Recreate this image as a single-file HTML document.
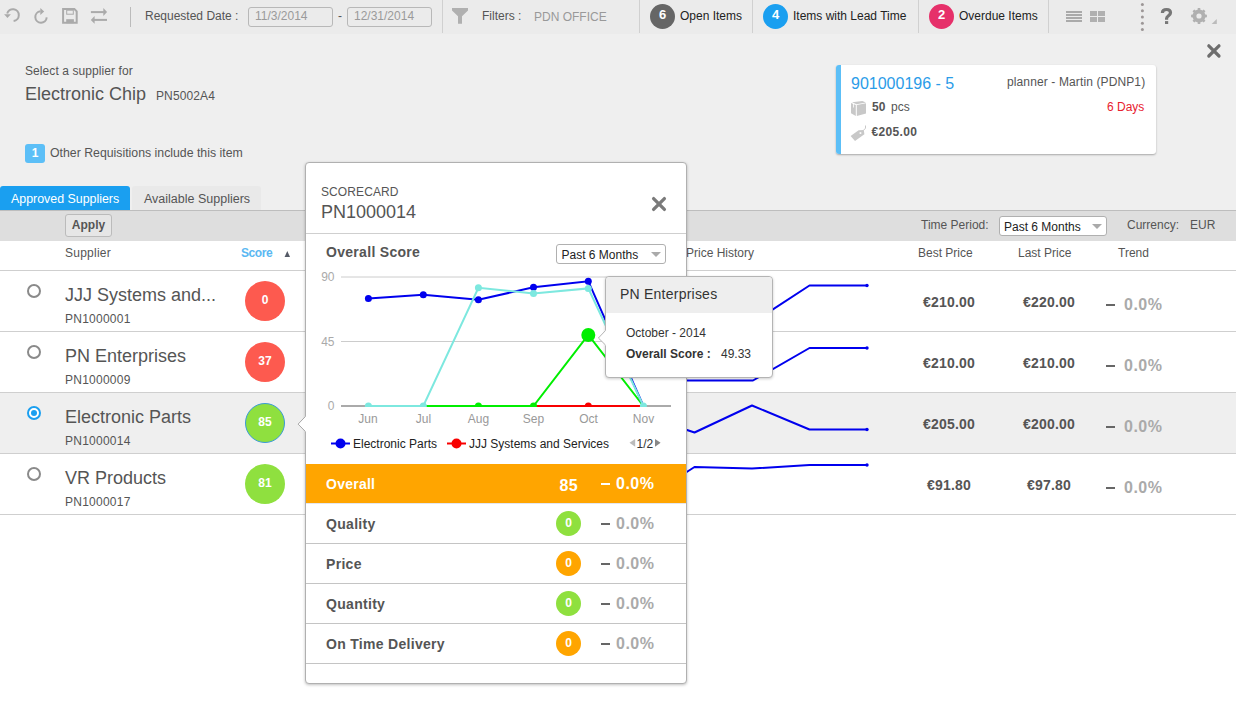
<!DOCTYPE html>
<html><head><meta charset="utf-8">
<style>
*{box-sizing:border-box;margin:0;padding:0}
html,body{width:1236px;height:703px;overflow:hidden;background:#fff;font-family:"Liberation Sans",sans-serif;color:#555;position:relative}
.a{position:absolute;white-space:nowrap;line-height:1}
#tb{position:absolute;left:0;top:0;width:1236px;height:34px;background:#ebebeb}
#main{position:absolute;left:0;top:34px;width:1236px;height:177px;background:#efefef}
.sep{position:absolute;top:0;width:1px;height:33px;background:#d0d0d0}
.inp{position:absolute;top:7px;height:20px;border:1px solid #b8b8b8;border-radius:3px;font-size:12px;color:#9a9a9a;padding-left:6px;line-height:16px}
.badge{position:absolute;top:4px;width:25px;height:25px;border-radius:50%;color:#fff;font-weight:bold;font-size:13px;text-align:center;line-height:21px}
.f12{font-size:12px}
.row{position:absolute;left:0;width:1236px;height:61px;border-bottom:1px solid #cfcfcf}
.radio{position:absolute;left:27px;top:13px;width:14px;height:14px;border:2px solid #8a8a8a;border-radius:50%;background:#fff}
.sname{position:absolute;left:65px;top:15px;font-size:18px;color:#555;line-height:1;white-space:nowrap}
.sid{position:absolute;left:65px;top:42px;font-size:12px;color:#555;line-height:1;white-space:nowrap;letter-spacing:.25px}
.score{position:absolute;left:245px;top:10px;width:40px;height:40px;border-radius:50%;color:#fff;font-weight:bold;font-size:12px;text-align:center;line-height:38px}
.price{position:absolute;top:24px;font-size:14px;font-weight:bold;color:#555;line-height:1;white-space:nowrap;letter-spacing:.2px}
.dash{position:absolute;width:9px;height:2px;background:#666}
.pct{position:absolute;font-size:16px;font-weight:bold;color:#aaa;line-height:1;white-space:nowrap;letter-spacing:.5px}
#pop{position:absolute;left:305px;top:162px;width:382px;height:522px;background:#fff;border:1px solid #b0b0b0;border-radius:4px;box-shadow:0 1px 3px rgba(0,0,0,.25)}
.srow{position:absolute;left:0;width:380px;height:40px;border-bottom:1px solid #c4c4c4}
.slab{position:absolute;left:20px;top:13px;font-size:14px;font-weight:bold;color:#555;line-height:1;white-space:nowrap;letter-spacing:.3px}
.sc{position:absolute;left:250px;top:7px;width:25px;height:25px;border-radius:50%;color:#fff;font-weight:bold;font-size:12px;text-align:center;line-height:25px}
</style></head><body>
<div id="tb">
  <div class="sep" style="left:130px;top:7px;height:20px;background:#bbb"></div>
  <div class="a f12" style="left:145px;top:10px;color:#555">Requested Date :</div>
  <div class="inp" style="left:248px;width:85px">11/3/2014</div>
  <div class="a f12" style="left:338px;top:10px">-</div>
  <div class="inp" style="left:347px;width:85px">12/31/2014</div>
  <div class="sep" style="left:442px"></div>
  <div class="a f12" style="left:482px;top:10px">Filters :</div>
  <div class="a f12" style="left:534px;top:11px;color:#999">PDN OFFICE</div>
  <div class="sep" style="left:639px"></div>
  <div class="badge" style="left:650px;background:#666">6</div>
  <div class="a f12" style="left:680px;top:10px;color:#222">Open Items</div>
  <div class="sep" style="left:752px"></div>
  <div class="badge" style="left:763px;background:#1a9ff0">4</div>
  <div class="a f12" style="left:793px;top:10px;color:#222">Items with Lead Time</div>
  <div class="sep" style="left:918px"></div>
  <div class="badge" style="left:929px;background:#e6306a">2</div>
  <div class="a f12" style="left:959px;top:10px;color:#222">Overdue Items</div>
  <div class="sep" style="left:1048px"></div>
</div>
<div id="main">
  <div class="a f12" style="left:25px;top:31px;letter-spacing:.08px">Select a supplier for</div>
  <div class="a" style="left:25px;top:51px;font-size:18px">Electronic Chip</div>
  <div class="a f12" style="left:156px;top:56px;letter-spacing:.12px">PN5002A4</div>
  <div class="a" style="left:25px;top:110px;width:20px;height:19px;background:#5cbff7;border-radius:3px;color:#fff;font-size:12px;font-weight:bold;text-align:center;line-height:19px">1</div>
  <div class="a" style="left:50px;top:113px;font-size:12.3px">Other Requisitions include this item</div>
  <div class="a" style="left:0;top:152px;width:130px;height:24px;background:#1a9ff0;border-radius:3px 3px 0 0;color:#fff;font-size:12.4px;line-height:26px;padding-left:11px">Approved Suppliers</div>
  <div class="a" style="left:132px;top:152px;width:129px;height:24px;background:#e9e9e9;border-radius:3px 3px 0 0;color:#555;font-size:12.5px;line-height:26px;padding-left:12px">Available Suppliers</div>
</div>

<!-- toolbar icons -->
<svg class="a" style="left:0;top:0;z-index:2" width="1236" height="34">
  <g fill="none" stroke="#aaaaaa" stroke-width="2">
    <path d="M13.62,20.96 A5.9,5.9 0 1 0 7.2,13.57"/>
    <path d="M46.69,17.4 A5.7,5.7 0 1 1 40.4,11.33"/>
  </g>
  <g fill="#aaaaaa">
    <path d="M4.1,14.2 L10.9,14.2 L7.5,17.9 Z"/>
    <path d="M40.3,8.1 L44.2,11.5 L40.3,14.9 Z"/>
  </g>
  <g fill="none" stroke="#aaaaaa">
    <path stroke-width="2" d="M63.1,9.1 H74.4 L76.7,11.4 V22.7 H63.1 Z"/>
    <rect x="66.7" y="10.2" width="6.6" height="4" stroke-width="1"/>
  </g>
  <rect x="66.2" y="19.2" width="7.7" height="4" fill="#aaaaaa"/>
  <g fill="#aaaaaa">
    <rect x="90.9" y="11.1" width="13" height="2"/>
    <path d="M103.3,8.1 L107.1,12.1 L103.3,16.1 Z"/>
    <rect x="94" y="18.9" width="13" height="2"/>
    <path d="M94.6,16 L90.8,19.9 L94.6,23.8 Z"/>
  </g>
  <path d="M452,8 H468 V10.5 L462,16.2 V23.8 H458 V16.2 L452,10.5 Z" fill="#b0b0b0"/>
  <g fill="#aaaaaa">
    <rect x="1066" y="11" width="16" height="2"/><rect x="1066" y="14" width="16" height="2"/>
    <rect x="1066" y="17" width="16" height="2"/><rect x="1066" y="20" width="16" height="2"/>
  </g>
  <g fill="#b0b0b0">
    <rect x="1090" y="11" width="7" height="5"/><rect x="1098" y="11" width="7" height="5"/>
    <rect x="1090" y="17" width="7" height="5"/><rect x="1098" y="17" width="7" height="5"/>
  </g>
  <g fill="#9c9696">
    <circle cx="1142.4" cy="4.4" r="1.5"/><circle cx="1142.4" cy="10.7" r="1.5"/><circle cx="1142.4" cy="17" r="1.5"/>
    <circle cx="1142.4" cy="23.2" r="1.5"/><circle cx="1142.4" cy="29.4" r="1.5"/>
  </g>
  <g id="gear" fill="#b0b0b0">
    <path fill-rule="evenodd" d="M1196.55,10.09 L1197.60,9.75 L1197.75,8.10 L1200.25,8.10 L1200.40,9.75 L1201.45,10.09 L1202.43,10.60 L1203.70,9.53 L1205.47,11.30 L1204.40,12.57 L1204.91,13.55 L1205.25,14.60 L1206.90,14.75 L1206.90,17.25 L1205.25,17.40 L1204.91,18.45 L1204.40,19.43 L1205.47,20.70 L1203.70,22.47 L1202.43,21.40 L1201.45,21.91 L1200.40,22.25 L1200.25,23.90 L1197.75,23.90 L1197.60,22.25 L1196.55,21.91 L1195.57,21.40 L1194.30,22.47 L1192.53,20.70 L1193.60,19.43 L1193.09,18.45 L1192.75,17.40 L1191.10,17.25 L1191.10,14.75 L1192.75,14.60 L1193.09,13.55 L1193.60,12.57 L1192.53,11.30 L1194.30,9.53 L1195.57,10.60 Z M1201.6,16 A2.6,2.6 0 1 0 1196.4,16 A2.6,2.6 0 1 0 1201.6,16 Z"/>
  </g>
  <path d="M1211.7,24 L1216.8,24 L1216.8,18.9 Z" fill="#bbbbbb"/>
</svg>
<svg class="a" style="left:0;top:0;z-index:3" width="1236" height="34"><path d="M1162.4,13 C1162.4,10.5 1164.3,9.5 1166.6,9.5 C1169,9.5 1170.5,10.8 1170.5,12.8 C1170.5,15.7 1166.6,15.9 1166.6,18.6 V19.8" stroke="#777" stroke-width="3.2" fill="none"/><rect x="1165" y="21.1" width="3.2" height="2.9" fill="#777"/></svg>
<!-- close X -->
<svg class="a" style="left:1200px;top:38px" width="28" height="26"><path d="M8.8,7.8 L19,18 M19,7.8 L8.8,18" stroke="#6e6e6e" stroke-width="3.2" stroke-linecap="round"/></svg>
<!-- supplier card -->
<div class="a" style="left:836px;top:65px;width:320px;height:89px;background:#fff;border-radius:3px;box-shadow:0 1px 2px rgba(0,0,0,.3);overflow:hidden">
  <div class="a" style="left:0;top:0;width:5px;height:90px;background:#5cbff7"></div>
</div>
<div class="a" style="left:851px;top:76px;font-size:16px;color:#2b9ce8">901000196 - 5</div>
<div class="a" style="left:1007px;top:76px;font-size:12px;color:#555;letter-spacing:.12px">planner - Martin (PDNP1)</div>
<div class="a" style="left:1107px;top:101px;font-size:12px;color:#e8212e">6 Days</div>
<div class="a" style="left:872px;top:101px;font-size:12px;font-weight:bold;color:#555">50</div>
<div class="a" style="left:891px;top:101px;font-size:12px;color:#555">pcs</div>
<div class="a" style="left:871.5px;top:126px;font-size:12px;font-weight:bold;color:#555;letter-spacing:.33px">€205.00</div>
<svg class="a" style="left:846px;top:96px" width="30" height="50">
  <g fill="#c8c8c8">
    <path d="M6,6.3 L16.3,5 L20,6.6 L10.6,8.3 Z"/>
    <path d="M5,7 L9.8,9 L9.8,20 L5,17.3 Z"/>
    <path d="M10.8,9 L20,7.2 L20,17.5 L10.8,20 Z"/>
  </g>
  <rect x="7" y="8" width="0.8" height="3.5" fill="#fff"/>
  <path d="M4.6,40 L12.6,34.3 L17.8,33.9 L18.4,38.3 L9,45 Z" fill="#c8c8c8"/>
  <rect x="13.6" y="36.2" width="1.7" height="1.7" fill="#fff"/>
  <path d="M17.6,34.2 L19.5,32.2 V29.5" stroke="#c8c8c8" stroke-width="1" fill="none"/>
</svg>
<!-- table -->
<div class="a" style="left:0;top:210px;width:1236px;height:31px;background:#dedede;border-top:1px solid #bdbdbd"></div>
<div class="a" style="left:65px;top:214px;width:47px;height:23px;border:1px solid #bbb;border-radius:3px;background:#e6e6e6;font-size:12px;font-weight:bold;color:#555;text-align:center;line-height:21px">Apply</div>
<div class="a f12" style="left:921px;top:219px">Time Period:</div>
<div class="a" style="left:999px;top:216px;width:108px;height:20px;background:#fff;border:1px solid #b0b0b0;border-radius:3px;font-size:12px;color:#222;line-height:20px;padding-left:4px">Past 6 Months</div>
<div class="a" style="left:1092px;top:224px;width:0;height:0;border-left:5px solid transparent;border-right:5px solid transparent;border-top:5px solid #aaa"></div>
<div class="a f12" style="left:1127px;top:219px">Currency:</div>
<div class="a f12" style="left:1190px;top:219px">EUR</div>
<div class="a" style="left:0;top:241px;width:1236px;height:30px;background:#fff;border-bottom:1px solid #cfcfcf"></div>
<div class="a f12" style="left:65px;top:247px;letter-spacing:.25px">Supplier</div>
<div class="a f12" style="left:241px;top:247px;color:#5ab8f2;font-weight:bold;letter-spacing:-.45px">Score</div>
<svg class="a" style="left:280px;top:248px" width="14" height="12"><path d="M4.6,9 L10,9 L7.3,3 Z" fill="#555a66"/></svg>
<div class="a f12" style="left:686px;top:247px">Price History</div>
<div class="a f12" style="left:918px;top:247px">Best Price</div>
<div class="a f12" style="left:1018px;top:247px">Last Price</div>
<div class="a f12" style="left:1118px;top:247px">Trend</div>

<div class="row" style="top:271px">
  <div class="radio"></div>
  <div class="sname">JJJ Systems and...</div><div class="sid">PN1000001</div>
  <div class="score" style="background:#fd5a4f">0</div>
  <div class="price" style="left:923px">€210.00</div>
  <div class="price" style="left:1023px">€220.00</div>
  <div class="dash" style="left:1106px;top:33px"></div>
  <div class="pct" style="left:1124px;top:26px">0.0%</div>
</div>
<div class="row" style="top:332px">
  <div class="radio"></div>
  <div class="sname">PN Enterprises</div><div class="sid">PN1000009</div>
  <div class="score" style="background:#fd5a4f">37</div>
  <div class="price" style="left:923px">€210.00</div>
  <div class="price" style="left:1023px">€210.00</div>
  <div class="dash" style="left:1106px;top:33px"></div>
  <div class="pct" style="left:1124px;top:26px">0.0%</div>
</div>
<div class="row" style="top:393px;background:#efefef">
  <div class="radio" style="border-color:#1a9ff0"><div style="position:absolute;left:2px;top:2px;width:6px;height:6px;border-radius:50%;background:#1a9ff0"></div></div>
  <div class="sname">Electronic Parts</div><div class="sid">PN1000014</div>
  <div class="score" style="background:#8fe03f;border:1px solid #3a9ad8;line-height:36px">85</div>
  <div class="price" style="left:923px">€205.00</div>
  <div class="price" style="left:1023px">€200.00</div>
  <div class="dash" style="left:1106px;top:33px"></div>
  <div class="pct" style="left:1124px;top:26px">0.0%</div>
</div>
<div class="row" style="top:454px">
  <div class="radio"></div>
  <div class="sname">VR Products</div><div class="sid">PN1000017</div>
  <div class="score" style="background:#8fe03f">81</div>
  <div class="price" style="left:927px">€91.80</div>
  <div class="price" style="left:1027px">€97.80</div>
  <div class="dash" style="left:1106px;top:33px"></div>
  <div class="pct" style="left:1124px;top:26px">0.0%</div>
</div>

<!-- sparklines -->
<svg class="a" style="left:0;top:0" width="1236" height="703">
  <g fill="none" stroke="#0000ee" stroke-width="2" stroke-linejoin="round">
    <polyline points="637,340 694.5,340 752,323 809.5,285.5 867,285.5"/>
    <polyline points="637,380.5 694.5,380.5 753,380.5 809.5,348 867,348"/>
    <polyline points="637,413.3 694.5,432.5 752,405.5 809.5,429.5 867,429.5"/>
    <polyline points="637,504 694.5,467 752,468.5 809.5,465 867,465"/>
  </g>
  <g fill="#0000ee"><circle cx="867" cy="285.5" r="1.7"/><circle cx="867" cy="348" r="1.7"/><circle cx="867" cy="429.5" r="1.7"/><circle cx="867" cy="465" r="1.7"/></g>
</svg>

<!-- scorecard popup -->
<div id="pop">
  <div class="a f12" style="left:15px;top:23px;color:#555;letter-spacing:.1px">SCORECARD</div>
  <div class="a" style="left:15px;top:40px;font-size:18px;color:#555">PN1000014</div>
  <div class="a" style="left:0;top:70px;width:380px;height:1px;background:#cfcfcf"></div>
  <div class="a" style="left:20px;top:82px;font-size:14px;font-weight:bold;color:#555;letter-spacing:.3px">Overall Score</div>
  <div class="a" style="left:250px;top:81px;width:110px;height:20px;border:1px solid #b0b0b0;border-radius:3px;background:#fff;font-size:12px;color:#222;line-height:20px;padding-left:4.5px">Past 6 Months</div>
  <div class="a" style="left:345px;top:89px;width:0;height:0;border-left:5px solid transparent;border-right:5px solid transparent;border-top:5px solid #aaa"></div>
  <svg class="a" style="left:345px;top:33px" width="16" height="16"><path d="M2.6,2.6 L13.4,13.4 M13.4,2.6 L2.6,13.4" stroke="#7a7a7a" stroke-width="3.3" stroke-linecap="round"/></svg>
  <div class="a" style="left:0;top:301px;width:380px;height:39px;background:#ffa500"></div>
  <div class="a" style="left:20px;top:314px;font-size:14px;font-weight:bold;color:#fff;letter-spacing:.25px">Overall</div>
  <div class="a" style="left:253.5px;top:315px;font-size:16px;font-weight:bold;color:#fff;letter-spacing:.3px">85</div>
  <div class="a" style="left:295px;top:320px;width:9px;height:2px;background:#fff"></div>
  <div class="a" style="left:310px;top:313px;font-size:16px;font-weight:bold;color:#fff;letter-spacing:.5px">0.0%</div>
  <div class="a" style="left:0;top:340px;width:380px;height:1px;background:#e4e6ee"></div><div class="srow" style="top:341px"><div class="slab">Quality</div><div class="sc" style="background:#8fe03f">0</div><div class="dash" style="left:295px;top:19px"></div><div class="pct" style="left:310px;top:12px">0.0%</div></div>
  <div class="srow" style="top:381px"><div class="slab">Price</div><div class="sc" style="background:#ffa500">0</div><div class="dash" style="left:295px;top:19px"></div><div class="pct" style="left:310px;top:12px">0.0%</div></div>
  <div class="srow" style="top:421px"><div class="slab">Quantity</div><div class="sc" style="background:#8fe03f">0</div><div class="dash" style="left:295px;top:19px"></div><div class="pct" style="left:310px;top:12px">0.0%</div></div>
  <div class="srow" style="top:461px"><div class="slab">On Time Delivery</div><div class="sc" style="background:#ffa500">0</div><div class="dash" style="left:295px;top:19px"></div><div class="pct" style="left:310px;top:12px">0.0%</div></div>
</div>


<svg class="a" style="left:296px;top:414px;z-index:4" width="12" height="20"><path d="M9.5,2.4 L2.1,10.1 L9.5,17.6" fill="#fff" stroke="#a8a8a8" stroke-width="1"/><rect x="9" y="2.8" width="3" height="14.5" fill="#fff"/></svg>
<!-- chart overlay -->
<svg class="a" style="left:0;top:0;z-index:5" width="1236" height="703" font-family="Liberation Sans, sans-serif">
  <line x1="341" y1="277" x2="671" y2="277" stroke="#cccccc" stroke-width="1"/>
  <line x1="341" y1="341.5" x2="671" y2="341.5" stroke="#cccccc" stroke-width="1"/>
  <line x1="341" y1="406" x2="671" y2="406" stroke="#aaaaaa" stroke-width="2"/>
  <g font-size="12" fill="#aaaaaa" text-anchor="end">
    <text x="334.5" y="281">90</text><text x="334.5" y="345.5">45</text><text x="334.5" y="410">0</text>
  </g>
  <g font-size="12" fill="#999999" text-anchor="middle">
    <text x="368" y="422.5">Jun</text><text x="423.5" y="422.5">Jul</text><text x="478.5" y="422.5">Aug</text>
    <text x="533.5" y="422.5">Sep</text><text x="588.5" y="422.5">Oct</text><text x="643.5" y="422.5">Nov</text>
  </g>
  <defs><clipPath id="plot"><rect x="341" y="270" width="330" height="137"/></clipPath></defs>
  <g clip-path="url(#plot)">
  <!-- red -->
  <g stroke="#f80000" fill="#f80000" stroke-width="2">
    <polyline fill="none" points="368.4,406 423.3,406 478.4,406 533.5,406 588.3,406 643.4,406"/>
    <circle cx="588.3" cy="406" r="3.5" stroke="none"/>
  </g>
  <!-- green -->
  <g stroke="#00ee00" fill="#00ee00" stroke-width="2">
    <polyline fill="none" points="368.4,406 423.3,406 478.4,406 533.5,406 588.3,335 643.4,406"/>
    <circle cx="478.4" cy="406" r="3.5" stroke="none"/><circle cx="533.5" cy="406" r="3.5" stroke="none"/>
    <circle cx="588.3" cy="335" r="7" stroke="none"/>
  </g>
  <!-- blue -->
  <g stroke="#0000ee" fill="#0000ee" stroke-width="2">
    <polyline fill="none" points="368.4,298.6 423.3,294.8 478.4,299.8 533.5,287.3 588.3,281.2 643.4,406"/>
    <circle cx="368.4" cy="298.6" r="3.5" stroke="none"/><circle cx="423.3" cy="294.8" r="3.5" stroke="none"/>
    <circle cx="478.4" cy="299.8" r="3.5" stroke="none"/><circle cx="533.5" cy="287.3" r="3.5" stroke="none"/>
    <circle cx="588.3" cy="281.2" r="3.5" stroke="none"/>
  </g>
  <!-- cyan -->
  <g stroke="#7de8df" fill="#7de8df" stroke-width="2">
    <polyline fill="none" points="368.4,406 423.3,406 478.4,287.8 533.5,293.4 588.3,288.4 643.4,406"/>
    <circle cx="368.4" cy="406" r="3.5" stroke="none"/><circle cx="423.3" cy="406" r="3.5" stroke="none"/>
    <circle cx="478.4" cy="287.8" r="3.5" stroke="none"/><circle cx="533.5" cy="293.4" r="3.5" stroke="none"/>
    <circle cx="588.3" cy="288.4" r="3.5" stroke="none"/><circle cx="643.4" cy="406" r="3.5" stroke="none"/>
  </g>
  </g>
  <!-- legend -->
  <line x1="331" y1="443.5" x2="350" y2="443.5" stroke="#0000ee" stroke-width="2"/>
  <circle cx="340.5" cy="443.5" r="5" fill="#0000ee"/>
  <text x="353" y="447.7" font-size="12" fill="#222">Electronic Parts</text>
  <line x1="447" y1="443.5" x2="466" y2="443.5" stroke="#f80000" stroke-width="2"/>
  <circle cx="456.5" cy="443.5" r="5" fill="#f80000"/>
  <text x="469" y="447.7" font-size="12" fill="#222">JJJ Systems and Services</text>
  <path d="M629.5,442.8 L635.2,438.9 L635.2,446.8 Z" fill="#bbbbbb"/>
  <text x="636.5" y="447.7" font-size="12" fill="#333">1/2</text>
  <path d="M655,438.9 L660.6,442.8 L655,446.8 Z" fill="#888888"/>
</svg>
<!-- tooltip -->
<svg class="a" style="left:596px;top:328px;z-index:7" width="12" height="20"><path d="M10,2 L2.4,10 L10,17.5" fill="#fff" stroke="#b4b4b4" stroke-width="1"/><rect x="9.5" y="2.5" width="2.5" height="15" fill="#fff"/></svg>
<div class="a" style="left:605px;top:276px;width:168px;height:102px;background:#fff;border:1px solid #b4b4b4;border-radius:4px;box-shadow:0 1px 3px rgba(0,0,0,.2);z-index:6;overflow:visible">
  <div class="a" style="left:0;top:0;width:166px;height:36px;background:#eeeeee;border-radius:4px 4px 0 0"></div>
  <div class="a" style="left:14px;top:10px;font-size:14px;color:#333;letter-spacing:.23px">PN Enterprises</div>
  <div class="a" style="left:20px;top:50px;font-size:12px;color:#333">October - 2014</div>
  <div class="a" style="left:20px;top:71px;font-size:12px;color:#333;font-weight:bold">Overall Score :</div>
  <div class="a" style="left:115px;top:71px;font-size:12px;color:#333">49.33</div>
</div>
</body></html>
